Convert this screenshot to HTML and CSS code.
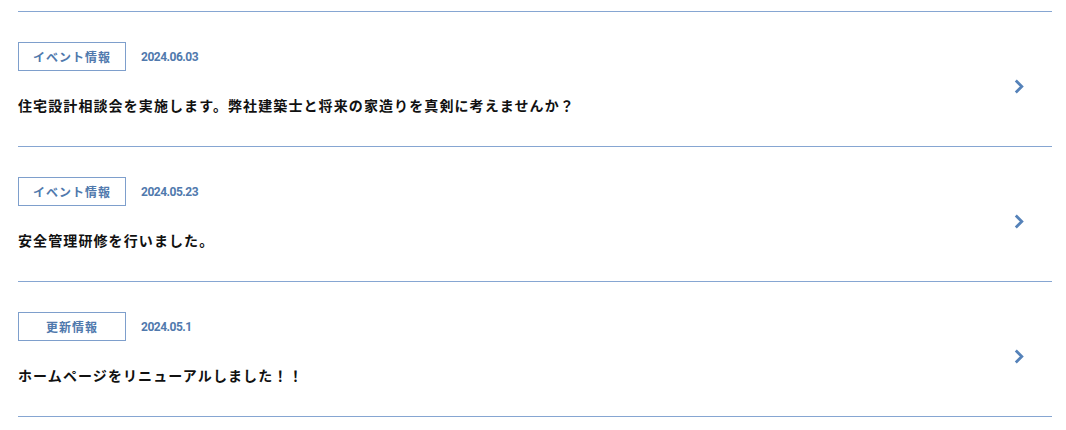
FILE: index.html
```html
<!DOCTYPE html>
<html lang="ja">
<head>
<meta charset="utf-8">
<link rel="stylesheet" href="styles.css">
</head>
<body>
<ul class="news">
  <li class="item">
    <div class="content">
      <div class="meta"><span class="tag">イベント情報</span><span class="date">2024.06.03</span></div>
      <p class="title">住宅設計相談会を実施します。弊社建築士と将来の家造りを真剣に考えませんか？</p>
    </div>
    <span class="arrow"><svg width="10" height="15" viewBox="0 0 10 15"><path d="M1.8 1.5 L7.8 7.5 L1.8 13.5" fill="none" stroke="#5582b9" stroke-width="2.8"/></svg></span>
  </li>
  <li class="item">
    <div class="content">
      <div class="meta"><span class="tag">イベント情報</span><span class="date">2024.05.23</span></div>
      <p class="title">安全管理研修を行いました。</p>
    </div>
    <span class="arrow"><svg width="10" height="15" viewBox="0 0 10 15"><path d="M1.8 1.5 L7.8 7.5 L1.8 13.5" fill="none" stroke="#5582b9" stroke-width="2.8"/></svg></span>
  </li>
  <li class="item">
    <div class="content">
      <div class="meta"><span class="tag">更新情報</span><span class="date">2024.05.1</span></div>
      <p class="title">ホームページをリニューアルしました！！</p>
    </div>
    <span class="arrow"><svg width="10" height="15" viewBox="0 0 10 15"><path d="M1.8 1.5 L7.8 7.5 L1.8 13.5" fill="none" stroke="#5582b9" stroke-width="2.8"/></svg></span>
  </li>
</ul>
</body>
</html>
```

FILE: styles.css
```css
html, body {
  margin: 0;
  padding: 0;
  background: #fff;
}
body {
  font-family: "Noto Sans CJK JP", "Noto Sans", sans-serif;
  color: #111;
}
.news {
  list-style: none;
  margin: 11px 14px 0 18px;
  padding: 0;
  border-bottom: 1px solid #86a6d2;
}
.item {
  display: flex;
  align-items: center;
  border-top: 1px solid #86a6d2;
  padding: 30px 0 29px;
}
.content {
  flex: 1;
}
.meta {
  display: flex;
  align-items: center;
  height: 29px;
}
.tag {
  box-sizing: border-box;
  width: 108px;
  height: 29px;
  border: 1px solid #7e9fcc;
  color: #5079ad;
  font-size: 12px;
  font-weight: 700;
  letter-spacing: 1px;
  text-align: center;
  line-height: 27px;
}
.date {
  margin-left: 15px;
  font-family: Roboto, "Liberation Sans", sans-serif;
  font-weight: 700;
  font-size: 12px;
  letter-spacing: -0.5px;
  color: #5079ad;
}
.title {
  margin: 22px 0 0;
  font-size: 14px;
  font-weight: 700;
  line-height: 24px;
  letter-spacing: 1.1px;
}
.arrow {
  display: flex;
  margin: 14px 28px 0 0;
}
```
